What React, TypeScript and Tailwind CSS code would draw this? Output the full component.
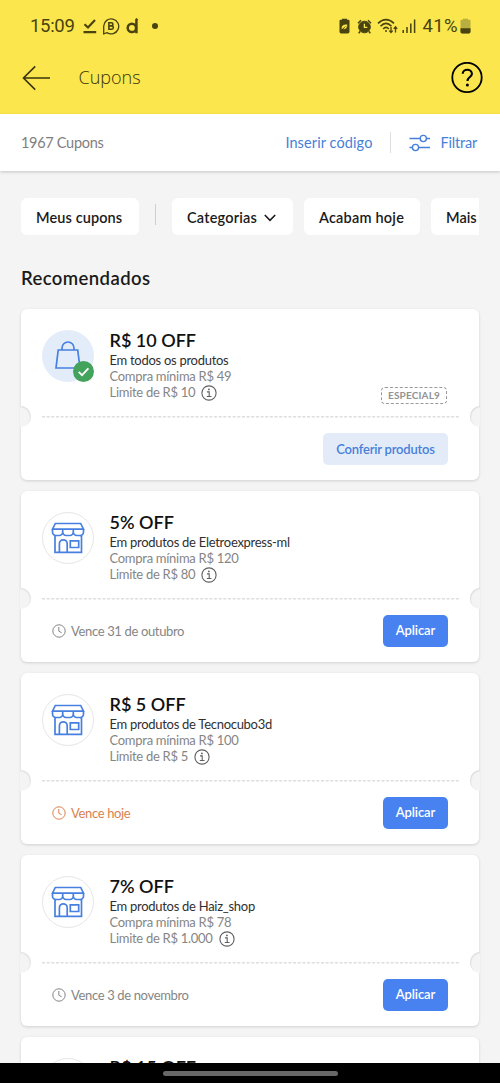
import { ReactNode } from 'react';

type Coupon = {
    title: string;
    scope: string;
    minimum: string;
    limit: string;
    code?: string;
    expires?: string;
    urgent?: boolean;
    applied?: boolean;
};

const coupons: Coupon[] = [
    { title: 'R$ 10 OFF', scope: 'Em todos os produtos', minimum: 'Compra mínima R$ 49', limit: 'Limite de R$ 10', code: 'ESPECIAL9', applied: true },
    { title: '5% OFF', scope: 'Em produtos de Eletroexpress-ml', minimum: 'Compra mínima R$ 120', limit: 'Limite de R$ 80', expires: 'Vence 31 de outubro' },
    { title: 'R$ 5 OFF', scope: 'Em produtos de Tecnocubo3d', minimum: 'Compra mínima R$ 100', limit: 'Limite de R$ 5', expires: 'Vence hoje', urgent: true },
    { title: '7% OFF', scope: 'Em produtos de Haiz_shop', minimum: 'Compra mínima R$ 78', limit: 'Limite de R$ 1.000', expires: 'Vence 3 de novembro' },
];

const StatusBar = () => (
    <div className="flex h-[52px] items-center pl-[30px] pr-[29px] font-['Roboto',sans-serif] text-[#48430f]">
        <span className="w-[52px] text-[18.5px] leading-6 tracking-[-0.3px]">15:09</span>
        <svg className="ml-px h-4 w-[14px]" viewBox="0 0 14 16" fill="none" stroke="currentColor" strokeWidth="2.2">
            <path d="M1.5 6.2 5 9.5l7-7.5M.5 14.2h12.7" />
        </svg>
        <svg className="ml-[5px] size-[18px]" viewBox="0 0 18 18" fill="none" stroke="currentColor">
            <path d="M1.7 16.8V9A7.5 7.5 0 1 1 5 15.6Z" strokeWidth="1.3" />
            <path d="M6.9 5.8h2.5a1.5 1.5 0 0 1 0 3.1H6.9Zm0 3.1h2.8a1.6 1.6 0 0 1 0 3.3H6.9Z" strokeWidth="1.6" />
        </svg>
        <svg className="ml-[6px] h-4 w-[13px]" viewBox="0 0 13 16" fill="none" stroke="currentColor" strokeWidth="2.5">
            <circle cx="5.9" cy="9.9" r="4.2" />
            <path d="M10.4 15.3V1.8l1-.9" />
        </svg>
        <span className="ml-[13px] size-[6px] rounded-full bg-current" />

        <svg className="ml-auto h-4 w-[11px]" viewBox="0 0 11 16">
            <path d="M3 1.7V.7h5v1h1.5q1 0 1 1v11q0 1.7-1.7 1.7H2.2q-1.7 0-1.7-1.7v-11q0-1 1-1Z" fill="currentColor" />
            <path d="M2.6 11.5c-1-3.4.8-5.4 5.8-5.6.3 4.2-1.5 6-4.5 5.1l2.5-2.6" fill="#fbe64d" stroke="#48430f" strokeWidth=".7" />
        </svg>
        <svg className="ml-[7.5px] size-[15px]" viewBox="0 0 15 15" fill="none" stroke="currentColor">
            <circle cx="7.5" cy="8" r="5.8" fill="currentColor" />
            <path d="M1 4.2 4 1.3m10 2.9-3-2.9M3.2 12.2l-1.5 2m10.1-2 1.5 2" strokeWidth="1.5" />
            <path d="M7.4 4.7v3.6h2.9" stroke="#fbe64d" strokeWidth="1.3" />
        </svg>
        <svg className="ml-[5px] h-4 w-[21px]" viewBox="0 0 21 16" fill="none" stroke="currentColor" strokeWidth="1.6">
            <path d="M1 5.4Q9-2.1 17 5.4M3.5 8.2Q9 2.5 14.5 8.2M6.2 11Q9 7.8 11.8 11" />
            <path d="M14 9v5.3m-1.7-1.7 1.7 2 1.7-2M18.5 14.5V9m-1.7 1.8 1.7-2 1.7 2" strokeWidth="1.3" />
            <circle cx="9" cy="12.9" r="1" fill="currentColor" stroke="none" />
        </svg>
        <svg className="ml-[4px] h-[14px] w-[14px]" viewBox="0 0 14 14" fill="none" stroke="currentColor" strokeWidth="1.5">
            <path d="M1.2 14v-3M5 14V8m3.8 6V4.5m3.8 9.5V.5" />
        </svg>
        <span className="ml-[6px] text-[18.5px] leading-6 tracking-[0.4px]">41%</span>
        <svg className="ml-[2px] h-4 w-[11px]" viewBox="0 0 11 16">
            <path d="M3 1.7V.7h5v1h1.5q1 0 1 1v11q0 1.7-1.7 1.7H2.2q-1.7 0-1.7-1.7v-11q0-1 1-1Z" fill="#b9ae40" />
            <path d="M.5 10.3h10v3.4q0 1.7-1.7 1.7H2.2q-1.7 0-1.7-1.7Z" fill="currentColor" />
        </svg>
    </div>
);

const Header = () => (
    <header className="h-[114px] bg-[#fbe64d]">
        <StatusBar />
        <div className="flex h-[51px] items-center pl-[22px] pr-[17px] text-[#38340b]">
            <svg className="h-[26px] w-[29px]" viewBox="0 0 29 26" fill="none" stroke="currentColor" strokeWidth="1.6">
                <path d="M13.2 1.4 1.5 13l11.7 11.6M1.5 13H28" />
            </svg>
            <h1 className="mb-[2px] ml-[27.5px] font-['Open_Sans',sans-serif] text-[18px] leading-6 font-light">Cupons</h1>
            <svg className="ml-auto size-8 text-black" viewBox="0 0 32 32" fill="none" stroke="currentColor" strokeWidth="2">
                <circle cx="16" cy="15.5" r="14.7" strokeWidth="1.8" />
                <path d="M11.7 11.7c0-5.3 9.2-5.3 9.2 0 0 3.4-4.4 3.3-4.4 7.3" strokeWidth="2.1" />
                <circle cx="16.4" cy="22.9" r="1.5" fill="currentColor" stroke="none" />
            </svg>
        </div>
    </header>
);

const Toolbar = () => (
    <div className="flex h-[57px] shrink-0 items-center bg-white pl-[21px] pr-[23px] text-[14.5px] text-[#4780d9] shadow-[0_1px_3px_rgba(0,0,0,0.2)]">
        <span className="tracking-[-0.3px] text-[#7e7e7e]">1967 Cupons</span>
        <span className="ml-auto tracking-[0.1px]">Inserir código</span>
        <span className="ml-[18px] h-[21px] w-px bg-[#dedede]" />
        <svg className="ml-[18px] h-[18px] w-[21px]" viewBox="0 0 21 18" fill="none" stroke="currentColor" strokeWidth="1.4">
            <path d="M.5 4.5H11m6.6 0H21M.5 13.5h2.7m6.6 0H21" />
            <circle cx="14.3" cy="4.5" r="3.1" />
            <circle cx="6.5" cy="13.5" r="3.1" />
        </svg>
        <span className="ml-[10px] tracking-[-0.2px]">Filtrar</span>
    </div>
);

const Chip = ({ className, children }: { className: string; children: ReactNode }) => (
    <div className={`flex h-[37px] shrink-0 items-center rounded-[6px] bg-white pt-[2px] pl-[15px] text-[14.5px] font-semibold whitespace-nowrap text-[#1a1a1a] ${className}`}>
        {children}
    </div>
);

const Filters = () => (
    <div className="mt-[27px] mr-[21px] ml-[21px] flex items-center overflow-hidden">
        <Chip className="w-[118px] tracking-[0.1px]">Meus cupons</Chip>
        <span className="mr-[16px] mb-1 ml-[16px] h-[21px] w-px shrink-0 bg-[#cfcfcf]" />
        <Chip className="w-[121px] tracking-[0.2px]">
            Categorias
            <svg className="ml-[7px] h-[8px] w-[12px]" viewBox="0 0 12 8" fill="none" stroke="currentColor" strokeWidth="1.6">
                <path d="m.8 1 5.2 5.4L11.2 1" />
            </svg>
        </Chip>
        <Chip className="ml-[11px] w-[116px] tracking-[0.2px]">Acabam hoje</Chip>
        <Chip className="ml-[11px] w-[60px]">Mais</Chip>
    </div>
);

const StoreIcon = () => (
    <div className="flex size-[52px] items-center justify-center rounded-full border border-[#e6e6e6]">
        <svg className="h-[32px] w-[34px]" viewBox="0 0 34 32" fill="none" stroke="#4780e0" strokeWidth="1.7">
            <path d="M4.3 1.5h25.4l2.8 5.7H1.5ZM1.5 7.2v2.9a3.3 3.3 0 0 0 3.8 3.4h3a3.4 3.4 0 0 0 3.4-3.4 3.4 3.4 0 0 0 3.4 3.4h3.8a3.4 3.4 0 0 0 3.4-3.4 3.4 3.4 0 0 0 3.4 3.4h3a3.3 3.3 0 0 0 3.8-3.4V7.2M11.7 7.5v3M22.3 7.5v3M4 13.5v16.8h26.5V13.5M8.4 30v-8.3a3.9 3.9 0 0 1 7.8 0V30" />
            <path d="M19.3 18.8h8.4v6.7h-8.4Z" />
        </svg>
    </div>
);

const BagIcon = () => (
    <div className="relative flex size-[52px] items-center justify-center rounded-full bg-[#e3edfa]">
        <svg className="mb-[2px] h-[28px] w-[26px]" viewBox="0 0 26 28" fill="none" stroke="#4780e0" strokeWidth="1.7">
            <path d="M3.2 9h19.5l2.3 18H1ZM7 9V7a6 6 0 0 1 12 0v2" />
        </svg>
        <svg className="absolute right-0 bottom-0 size-[21px]" viewBox="0 0 21 21" fill="none">
            <circle cx="10.5" cy="10.5" r="10.5" fill="#43a25b" />
            <path d="m5.7 10.8 3.3 3.3 6.4-6.8" stroke="white" strokeWidth="1.8" />
        </svg>
    </div>
);

const InfoIcon = () => (
    <svg className="size-4" viewBox="0 0 16 16" fill="none" stroke="#5f5f5f" strokeWidth="1.1">
        <circle cx="8" cy="8" r="7.1" />
        <path d="M6 6.9h2.2v4.6M5.8 11.5h4.7" />
        <circle cx="7.9" cy="4.4" r=".9" fill="#5f5f5f" stroke="none" />
    </svg>
);

const ClockIcon = () => (
    <svg className="size-[14px]" viewBox="0 0 14 14" fill="none" stroke="currentColor">
        <circle cx="7" cy="7" r="6.2" />
        <path d="M6.8 3v4.2l2.8 1.5" />
    </svg>
);

const CouponCard = ({ coupon }: { coupon: Coupon }) => (
    <article className="relative h-[171.5px] shrink-0 rounded-[6px] bg-white shadow-[0_1px_3px_rgba(0,0,0,0.15)]">
        <div className="flex h-[108px] pt-[21px] pr-8 pl-[21px]">
            {coupon.applied ? <BagIcon /> : <StoreIcon />}
            <div className="-mt-[0.5px] ml-[15.5px] flex-1 text-[13px] leading-[15.8px] tracking-[-0.28px] text-[#858585]">
                <h3 className="h-[24.4px] text-[18px] leading-[23px] font-semibold tracking-normal text-[#111]">{coupon.title}</h3>
                <p className="text-[#303030]">{coupon.scope}</p>
                <p>{coupon.minimum}</p>
                <div className="flex">
                    <span>{coupon.limit}</span>
                    <span className="mt-[0.5px] ml-[6px]"><InfoIcon /></span>
                </div>
            </div>
            {coupon.code && (
                <span className="mt-[57px] flex h-[17px] w-[66px] items-center justify-center rounded-[4px] border border-dashed border-[#999] text-[10px] font-bold tracking-[0.15px] text-[#929292]">
                    {coupon.code}
                </span>
            )}
        </div>
        <svg className="mx-[21px] -mt-[0.5px] block h-[1.5px] w-[417px]" viewBox="0 0 417 1.5">
            <path d="M0 .75h417" stroke="#dedede" strokeWidth="1.5" strokeDasharray="3 1.65" />
        </svg>
        <span className="absolute top-[97px] -left-px h-[21px] w-[11px] rounded-r-full bg-[#f4f4f4] shadow-[inset_-1px_1px_1px_#e2e2e2]" />
        <span className="absolute top-[97px] -right-px h-[21px] w-[10px] rounded-l-full bg-[#f4f4f4] shadow-[inset_1px_1px_1px_#dedede]" />
        <div className="flex items-center pt-[15.5px] pr-[31px] pl-[31px]">
            {coupon.expires && (
                <div className={`flex items-center gap-[5px] pt-px text-[13px] tracking-[-0.35px] ${coupon.urgent ? 'text-[#d98150]' : 'text-[#858585]'}`}>
                    <ClockIcon />
                    <span>{coupon.expires}</span>
                </div>
            )}
            {coupon.applied ? (
                <button className="ml-auto h-[31.5px] w-[125px] rounded-[5px] bg-[#e3ebf8] pt-px text-[13px] font-semibold tracking-[-0.2px] text-[#4780d9]">Conferir produtos</button>
            ) : (
                <button className="ml-auto h-[31.5px] w-[65px] rounded-[5px] bg-[#4882f0] text-[13px] font-semibold tracking-[-0.1px] text-white">Aplicar</button>
            )}
        </div>
    </article>
);

// Only the top edge of the next coupon shows above the navigation bar
const NextCoupon = () => (
    <article className="flex h-[60px] rounded-t-[6px] bg-white pt-[21px] pl-[21px] shadow-[0_1px_3px_rgba(0,0,0,0.15)]">
        <StoreIcon />
        <h3 className="-mt-[1.5px] ml-[15.5px] text-[18px] leading-[23px] font-semibold text-[#111]">R$ 15 OFF</h3>
    </article>
);

const App = () => (
    <div className="flex h-[1083px] w-[500px] flex-col overflow-hidden bg-[#f4f4f4] font-['Lato',sans-serif]">
        <Header />
        <Toolbar />
        <main className="min-h-0 flex-1 overflow-hidden">
            <Filters />
            <h2 className="mt-[30px] ml-[21px] text-[18.5px] leading-[27px] font-semibold tracking-[0.4px] text-[#1a1a1a]">Recomendados</h2>
            <div className="mt-[16.5px] flex flex-col gap-[10.5px] px-[21px]">
                {coupons.map((coupon) => (
                    <CouponCard key={coupon.title} coupon={coupon} />
                ))}
                <NextCoupon />
            </div>
        </main>
        <footer className="flex h-5 shrink-0 justify-center bg-black pt-2">
            <span className="h-[5px] w-[175px] rounded-full bg-[#676767]" />
        </footer>
    </div>
);

export default App;
